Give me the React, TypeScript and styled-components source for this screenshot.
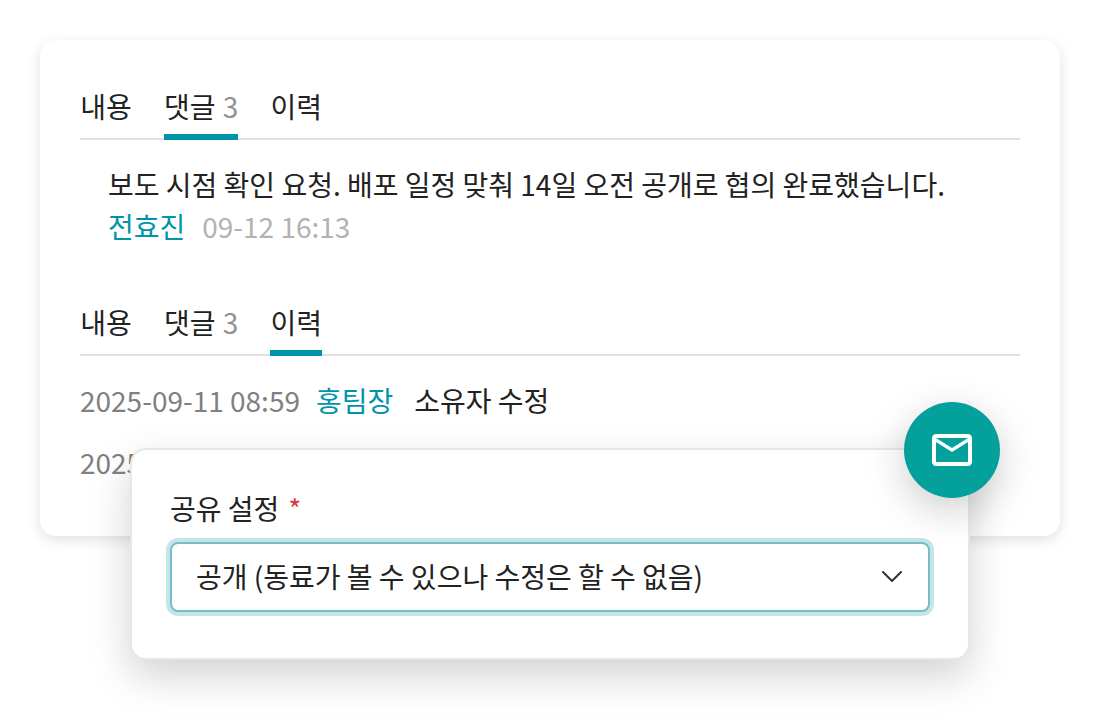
import React from "react";
import styled, { createGlobalStyle, css } from "styled-components";

const color = {
  ink: "#222222",
  accent: "#0094aa",
  fab: "#04a09b",
  line: "#e0e0e0",
};

const GlobalStyle = createGlobalStyle`
  *, *::before, *::after { box-sizing: border-box; }
  body {
    margin: 0;
    background: #ffffff;
    color: ${color.ink};
    font-family: "Noto Sans CJK JP", "Noto Sans CJK KR", sans-serif;
    font-size: 28px;
    line-height: 42px;
  }
  button, select { font: inherit; color: inherit; }
`;

const Page = styled.main`
  min-height: 100vh;
  padding: 40px;
`;

const Card = styled.section`
  display: flex;
  flex-direction: column;
  gap: 49px;
  padding: 40px 40px 53px;
  border-radius: 16px;
  background: #ffffff;
  box-shadow: 0 4px 14px rgba(0, 0, 0, 0.12);
`;

const TabList = styled.div`
  display: flex;
  gap: 32px;
  box-shadow: inset 0 -2px 0 ${color.line};
`;

const Tab = styled.button<{ $active?: boolean }>`
  min-width: 52px;
  padding: 5px 0 7px;
  border: 0;
  border-bottom: 6px solid transparent;
  background: none;
  cursor: pointer;
  ${(p) =>
    p.$active &&
    css`
      border-bottom-color: ${color.accent};
    `}
`;

const Count = styled.span`
  margin-left: 1px;
  color: #909096;
`;

const Comment = styled.article`
  padding: 23px 28px 0;
`;

const CommentText = styled.p`
  margin: 0;
`;

const Meta = styled.div`
  display: flex;
  gap: 17px;
`;

const Author = styled.a`
  color: ${color.accent};
  text-decoration: none;
`;

const CommentTime = styled.time`
  color: #b2b2b2;
`;

const History = styled.ul`
  display: flex;
  flex-direction: column;
  gap: 20px;
  margin: 0;
  padding: 23px 0 0;
  list-style: none;
`;

const HistoryRow = styled.li`
  display: flex;
  gap: 16px;
`;

const HistoryTime = styled.time`
  color: #808080;
`;

const Action = styled.span`
  padding-left: 5px;
`;

const SharePanel = styled.form`
  position: relative;
  display: flex;
  flex-direction: column;
  gap: 13px;
  margin: -88px 90px 0;
  padding: 37px 38px 46px;
  border: 2px solid #e4e9e8;
  border-radius: 16px;
  background: #ffffff;
  box-shadow: 0 16px 40px rgba(0, 0, 0, 0.18);
`;

const FieldLabel = styled.label`
  display: flex;
  gap: 9px;
`;

const Required = styled.span`
  color: #dc3545;
`;

const SelectBox = styled.div`
  display: grid;
  align-items: center;

  > * {
    grid-area: 1 / 1;
  }
`;

const Select = styled.select`
  width: 100%;
  height: 70px;
  padding: 0 72px 2px 24px;
  border: 2px solid #74bfc7;
  border-radius: 8px;
  outline: 0;
  background: #ffffff;
  box-shadow: 0 0 0 4px #c5e5e8;
  appearance: none;
`;

const Chevron = styled.svg`
  justify-self: end;
  margin-right: 28px;
  pointer-events: none;
`;

const MailButton = styled.button`
  position: absolute;
  top: -48px;
  right: -32px;
  display: grid;
  place-items: center;
  width: 96px;
  height: 96px;
  padding: 0;
  border: 0;
  border-radius: 50%;
  background: ${color.fab};
  color: #ffffff;
  box-shadow: 0 12px 40px rgba(0, 0, 0, 0.2);
  cursor: pointer;
`;

type TabKey = "body" | "comments" | "history";

function Tabs({ active, label }: { active: TabKey; label: string }) {
  return (
    <TabList role="tablist" aria-label={label}>
      <Tab type="button" role="tab" aria-selected={active === "body"} $active={active === "body"}>
        내용
      </Tab>
      <Tab type="button" role="tab" aria-selected={active === "comments"} $active={active === "comments"}>
        댓글 <Count>3</Count>
      </Tab>
      <Tab type="button" role="tab" aria-selected={active === "history"} $active={active === "history"}>
        이력
      </Tab>
    </TabList>
  );
}

export default function App() {
  return (
    <>
      <GlobalStyle />
      <Page>
        <Card>
          <div>
            <Tabs active="comments" label="댓글" />
            <Comment>
              <CommentText>보도 시점 확인 요청. 배포 일정 맞춰 14일 오전 공개로 협의 완료했습니다.</CommentText>
              <Meta>
                <Author href="#author">전효진</Author>
                <CommentTime>09-12 16:13</CommentTime>
              </Meta>
            </Comment>
          </div>
          <div>
            <Tabs active="history" label="이력" />
            <History>
              <HistoryRow>
                <HistoryTime>2025-09-11 08:59</HistoryTime>
                <Author href="#owner">홍팀장</Author>
                <Action>소유자 수정</Action>
              </HistoryRow>
              <HistoryRow>
                <HistoryTime>2025</HistoryTime>
              </HistoryRow>
            </History>
          </div>
        </Card>

        <SharePanel>
          <FieldLabel htmlFor="share">
            공유 설정 <Required>*</Required>
          </FieldLabel>
          <SelectBox>
            <Select id="share" required defaultValue="public">
              <option value="public">공개 (동료가 볼 수 있으나 수정은 할 수 없음)</option>
            </Select>
            <Chevron width="20" height="12" viewBox="0 0 20 12" fill="none" aria-hidden="true">
              <path d="M1 1l9 9 9-9" stroke="#333333" strokeWidth="2" strokeLinecap="round" strokeLinejoin="round" />
            </Chevron>
          </SelectBox>
          <MailButton type="button" aria-label="메일">
            <svg width="48" height="48" viewBox="0 0 24 24" fill="currentColor" aria-hidden="true">
              <path d="M22 6c0-1.1-.9-2-2-2H4c-1.1 0-2 .9-2 2v12c0 1.1.9 2 2 2h16c1.1 0 2-.9 2-2V6zm-2 0l-8 5-8-5h16zm0 12H4V8l8 5 8-5v10z" />
            </svg>
          </MailButton>
        </SharePanel>
      </Page>
    </>
  );
}
